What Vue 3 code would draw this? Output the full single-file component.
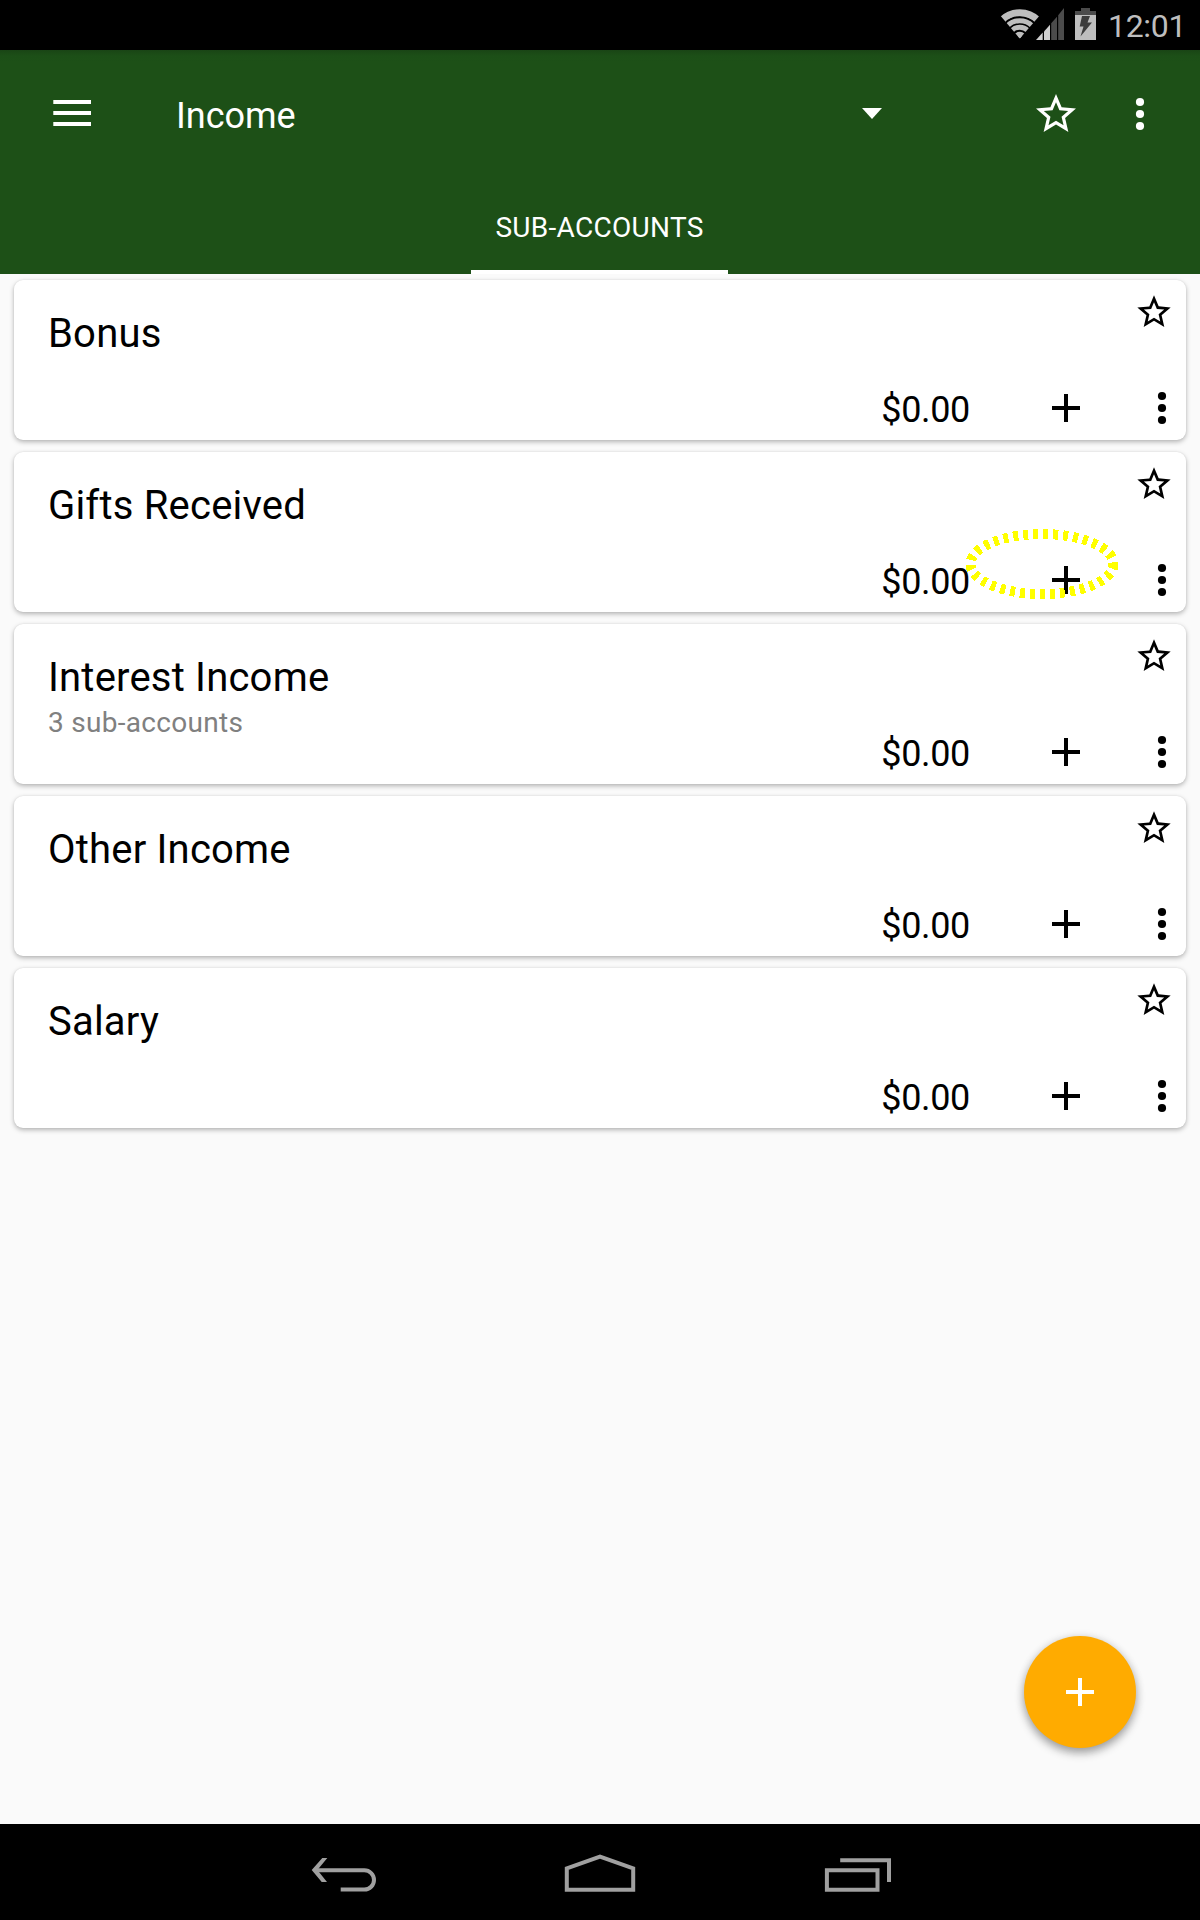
<script setup>
const accounts = [
  { name: 'Bonus', balance: '$0.00' },
  { name: 'Gifts Received', balance: '$0.00', highlighted: true },
  { name: 'Interest Income', balance: '$0.00', note: '3 sub-accounts' },
  { name: 'Other Income', balance: '$0.00' },
  { name: 'Salary', balance: '$0.00' },
]

const starPath =
  'M22 9.24l-7.19-.62L12 2 9.19 8.63 2 9.24l5.46 4.73L5.82 21 12 17.27 18.18 21l-1.63-7.03L22 9.24zM12 15.4l-3.76 2.27 1-4.28-3.32-2.88 4.38-.38L12 6.1l1.71 4.04 4.38.38-3.32 2.88 1 4.28L12 15.4z'
</script>

<template>
  <div class="screen">
    <div class="status">
      <svg class="status-icons" width="100" height="34" viewBox="0 0 100 34">
        <defs>
          <clipPath id="wifi-fan"><path d="M19.8 32.5L-1 8V0H41V8z" /></clipPath>
        </defs>
        <g clip-path="url(#wifi-fan)" fill="none" stroke="#bebebe">
          <circle cx="19.8" cy="32.5" r="3.8" fill="#bebebe" stroke-width="6" />
          <circle cx="19.8" cy="32.5" r="11.3" stroke-width="5" />
          <circle cx="19.8" cy="32.5" r="17.8" stroke-width="5" />
          <circle cx="19.8" cy="32.5" r="25.5" stroke-width="7.6" />
          <circle cx="19.8" cy="32.5" r="21.6" stroke="#000" stroke-width="1.2" />
        </g>
        <path d="M36 34L42.7 26.5V34z" fill="#cfcfcf" />
        <path d="M44 25.5L50 18.7V34H44z" fill="#cfcfcf" />
        <path d="M51.2 17.3L57 10.7V34H51.2zM58.2 9.3L64 2V34H58.2z" fill="#4b4b4b" />
        <path d="M75 9V5h6V2h9v3h6v4z" fill="#4b4b4b" />
        <path d="M75 9h21v25H75z" fill="#bebebe" />
        <path d="M82 10h8l-2.5 6.5H92L80.5 30.5l3-10H79.7z" fill="#3c3c3c" />
      </svg>
      <span class="clock">12:01</span>
    </div>

    <header class="header">
      <div class="toolbar">
        <svg class="menu" width="38" height="26" viewBox="0 0 38 26" fill="#fff">
          <path d="M.3 0H38V4H.3zM.3 11H38v4H.3zM.3 22H38v4H.3z" />
        </svg>
        <span class="title">Income</span>
        <svg class="caret" width="20" height="11" viewBox="0 0 20 11">
          <path d="M0 0H20L10 11z" fill="#fff" />
        </svg>
        <svg class="fav" width="48" height="48" viewBox="0 0 24 24">
          <path :d="starPath" fill="#fff" />
        </svg>
        <svg class="more" width="10" height="34" viewBox="0 0 10 34" fill="#fff">
          <circle cx="5" cy="5" r="4.1" /><circle cx="5" cy="17" r="4.1" /><circle cx="5" cy="29" r="4.1" />
        </svg>
      </div>
      <div class="tab"><span>SUB-ACCOUNTS</span></div>
    </header>

    <main class="list">
      <article v-for="a in accounts" :key="a.name" class="card">
        <div class="info">
          <div class="name">{{ a.name }}</div>
          <div v-if="a.note" class="note">{{ a.note }}</div>
        </div>
        <div class="side">
          <svg class="star" width="40" height="40" viewBox="0 0 24 24"><path :d="starPath" /></svg>
          <div class="actions">
            <span class="balance">{{ a.balance }}</span>
            <svg class="add" width="28" height="28" viewBox="0 0 28 28">
              <path d="M12 0h4v12h12v4H16v12h-4V16H0v-4h12z" />
            </svg>
            <svg class="dots" width="10" height="34" viewBox="0 0 10 34">
              <circle cx="5" cy="5" r="4.1" /><circle cx="5" cy="17" r="4.1" /><circle cx="5" cy="29" r="4.1" />
            </svg>
          </div>
        </div>
        <svg v-if="a.highlighted" class="ring" width="160" height="76" viewBox="0 0 160 76">
          <ellipse
            cx="80" cy="38" rx="71.5" ry="30" fill="none" stroke="#ff0"
            stroke-width="10" stroke-dasharray="5 5" shape-rendering="crispEdges"
          />
        </svg>
      </article>
    </main>

    <button class="fab" aria-label="Add">
      <svg width="28" height="28" viewBox="0 0 28 28" fill="#fff">
        <path d="M12 0h4v12h12v4H16v12h-4V16H0v-4h12z" />
      </svg>
    </button>

    <nav class="nav">
      <svg width="66" height="40" viewBox="0 0 66 40" fill="none" stroke="#a0a0a0" stroke-width="4">
        <path d="M5 14.2H54.3a9.7 9.7 0 0 1 0 19.4H30.7" />
        <path d="M12.3 2H17.3L7.4 14 17 26H11.7L1.7 14z" fill="#a0a0a0" stroke="none" />
      </svg>
      <svg width="72" height="40" viewBox="0 0 72 40" fill="none" stroke="#a0a0a0" stroke-width="4">
        <path d="M2.8 33.7V12.4L36 .6 69.2 12.4V33.7z" />
      </svg>
      <svg width="68" height="40" viewBox="0 0 68 40" fill="none" stroke="#a0a0a0" stroke-width="4">
        <path d="M2.9 14.2H53.5V33.7H2.9zM16.2 4.2H65V26" />
      </svg>
    </nav>
  </div>
</template>

<style>
body {
  margin: 0;
}
</style>

<style scoped>
.screen {
  position: relative;
  display: flex;
  flex-direction: column;
  width: 1200px;
  height: 1920px;
  overflow: hidden;
  background: #fafafa;
  color: #000;
  font-family: Roboto, sans-serif;
}
svg {
  display: block;
  flex: none;
  overflow: visible;
}
.status {
  display: flex;
  flex: none;
  height: 50px;
  background: #000;
}
.status-icons {
  margin: 6px 0 0 1000px;
}
.clock {
  margin: 7px 0 0 8px;
  font-size: 32px;
  line-height: 38px;
  letter-spacing: -0.3px;
  color: #bebebe;
}
.header {
  display: flex;
  flex: none;
  flex-direction: column;
  height: 224px;
  background: linear-gradient(#194515, #1c4f17 6px, #1d5017 12px);
  color: #fff;
}
.toolbar {
  display: flex;
  align-items: flex-start;
  height: 128px;
}
.menu {
  margin: 50px 0 0 53px;
}
.title {
  width: 686px;
  margin: 45px 0 0 85px;
  font-size: 36px;
  line-height: 42px;
}
.caret {
  margin-top: 58px;
}
.fav {
  margin: 40px 0 0 150px;
}
.more {
  margin: 47px 0 0 55px;
}
.tab {
  display: flex;
  justify-content: center;
  box-sizing: border-box;
  width: 257px;
  height: 96px;
  margin-left: 471px;
  padding-top: 34px;
  border-bottom: 4px solid #fff;
  font-size: 28px;
  line-height: 32px;
  letter-spacing: 0.3px;
}
.list {
  display: flex;
  flex: 1;
  flex-direction: column;
  gap: 12px;
  padding: 6px 14px 0;
}
.card {
  position: relative;
  display: flex;
  justify-content: space-between;
  height: 160px;
  border-radius: 9px;
  background: #fff;
  box-shadow: 0 2px 5px rgba(0, 0, 0, 0.28), 0 0 2px rgba(0, 0, 0, 0.08);
}
.info {
  padding: 30px 0 0 34px;
}
.name {
  font-size: 40px;
  line-height: 48px;
  letter-spacing: 0.2px;
}
.note {
  margin-top: 2px;
  font-size: 28px;
  line-height: 38px;
  letter-spacing: 0.3px;
  color: #808080;
}
.side {
  display: flex;
  flex-direction: column;
  align-items: flex-end;
}
.star {
  margin: 11.5px 12px 0 0;
}
.actions {
  display: flex;
  align-items: center;
  height: 42px;
  margin: 55.5px 19px 0 0;
}
.balance {
  padding-top: 4px;
  font-size: 36px;
  line-height: 42px;
  letter-spacing: -0.35px;
}
.add {
  margin-left: 82px;
}
.dots {
  margin-left: 77px;
}
.ring {
  position: absolute;
  top: 74px;
  left: 948px;
}
.fab {
  position: absolute;
  right: 64px;
  bottom: 172px;
  display: flex;
  align-items: center;
  justify-content: center;
  width: 112px;
  height: 112px;
  padding: 0;
  border: 0;
  border-radius: 50%;
  background: #ffab00;
  box-shadow: 0 5px 10px rgba(0, 0, 0, 0.32), 0 1px 10px rgba(0, 0, 0, 0.12);
}
.nav {
  display: flex;
  flex: none;
  align-items: flex-start;
  justify-content: space-between;
  box-sizing: border-box;
  height: 96px;
  padding: 32px 308px 0 310px;
  background: #000;
}
</style>
